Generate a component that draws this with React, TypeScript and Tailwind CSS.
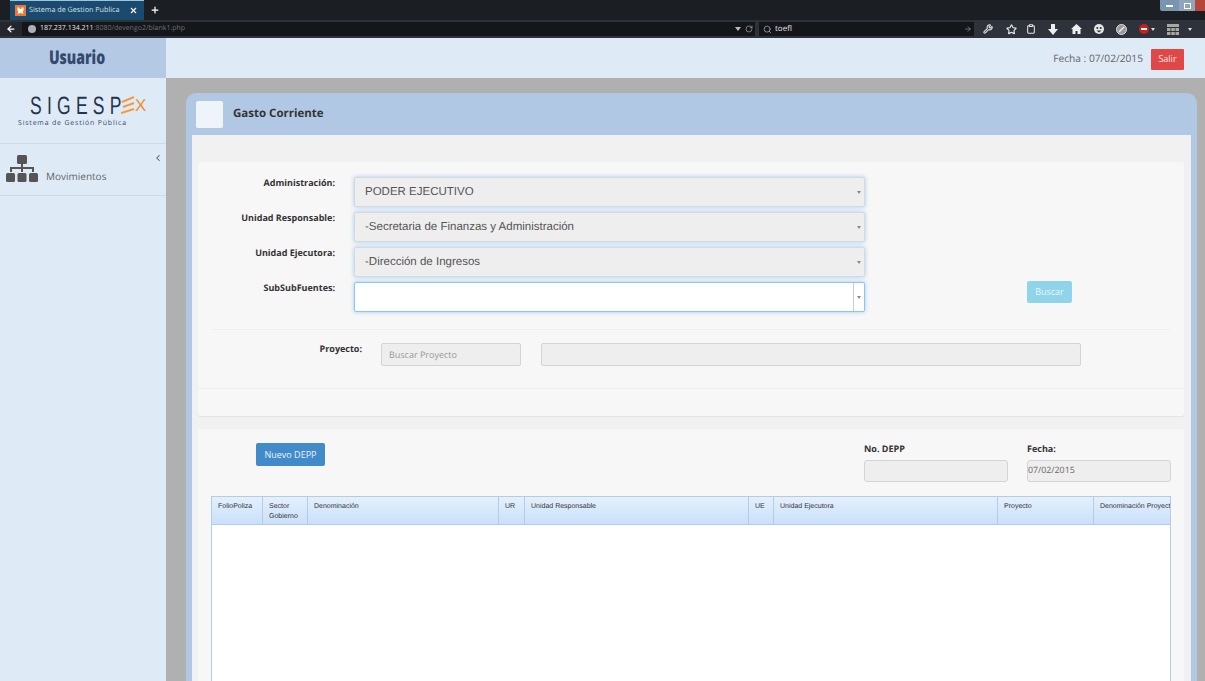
import React from "react";
import { ArrowLeft, ArrowRight, ChevronLeft, Clipboard, Plus, RotateCw, Search, Star, Wrench, X } from "lucide-react";

const os = "font-['Open_Sans',sans-serif]";
const lib = "font-['Liberation_Sans',sans-serif]";

function Caret() {
  return <span className="w-0 h-0 border-l-[2.5px] border-r-[2.5px] border-t-[3px] border-l-transparent border-r-transparent border-t-[#888]" />;
}

function SelectRow({ label, value, white }: { label: string; value?: string; white?: boolean }) {
  return (
    <div className="flex h-[30px] items-start">
      <label className={`w-[123px] -mt-[1px] text-right text-[9px] leading-[13px] font-bold text-[#333] ${os}`}>{label}</label>
      <div
        className={`ml-[19px] w-[511px] h-[30px] flex items-center rounded-[2px] border ${
          white ? "bg-white border-[#8cc4f2]" : "bg-[#eeeeee] border-[#d3dbe0]"
        } shadow-[0_0_4px_rgba(102,175,233,0.6)]`}
      >
        <span className={`flex-1 pl-[10px] pt-[2px] text-[11.5px] text-[#555] ${lib}`}>{value}</span>
        <span className={`w-[11px] h-full flex items-center justify-center ${white ? "border-l border-[#ccc]" : ""}`}>
          <Caret />
        </span>
      </div>
    </div>
  );
}

function Th({ w, children, last }: { w: string; children: React.ReactNode; last?: boolean }) {
  return (
    <div className={`${w} shrink-0 h-full pl-[6px] pt-[5px] text-[7px] leading-[10px] text-[#333] whitespace-nowrap overflow-hidden ${last ? "" : "border-r border-[#b5cde4]"} ${lib}`}>
      {children}
    </div>
  );
}

function TopBar() {
  const ic = "text-[#e6e6e6]";
  return (
    <div className="h-[38px] shrink-0 flex flex-col">
      <div className="h-[20px] bg-[#1b1e22] flex items-end relative">
        <div className="ml-[10px] w-[134px] h-[20px] bg-[#1a4a6e] border-t border-[#9cc4dc] flex items-center pl-[5px]">
          <svg width="11" height="11" viewBox="0 0 11 11" className="shrink-0">
            <rect width="11" height="11" fill="#f0762f" />
            <path d="M2.5 2.5h2v1.5h2V2.5h2v3l-1 1 1 2h-2l-1-1-1 1h-2l1-2-1-1z" fill="#fff" />
          </svg>
          <span className={`ml-[3px] w-[100px] shrink-0 whitespace-nowrap text-[7.2px] text-[#d8e2ea] ${os}`}>Sistema de Gestion Publica</span>
          <X size={9} strokeWidth={3} className="shrink-0 text-white" />
        </div>
        <Plus size={10} strokeWidth={3} className="ml-[6px] mb-[5px] text-white" />
        <div className="absolute right-0 top-0 w-[45px] h-[11px] flex rounded-bl-[2px] overflow-hidden">
          <div className="w-[19px] bg-[#7a95b0] flex items-center justify-center"><span className="w-[7px] h-[2px] bg-white" /></div>
          <div className="w-[16px] bg-[#8fa5ba] flex items-center justify-center"><span className="w-[7px] h-[6px] border border-white" /></div>
          <div className="flex-1 bg-[#b5463a]" />
        </div>
      </div>
      <div className="h-[18px] bg-[#2e323b] flex items-center">
        <div className="w-[22px] h-[14px] flex items-center justify-center bg-[#23262c]">
          <ArrowLeft size={10} strokeWidth={3} className="text-white" />
        </div>
        <div className="w-[733px] h-[14px] bg-[#14161a] flex items-center pl-[6px]">
          <span className="w-[8px] h-[8px] rounded-full bg-[#aab0b5]" />
          <span className={`ml-[4px] text-[7px] text-[#e2e2e2] ${os}`}>187.237.134.211<span className="text-[#6d7278]">:8080/devengo2/blank1.php</span></span>
          <span className="flex-1" />
          <span className="w-0 h-0 border-l-[3px] border-r-[3px] border-t-[4px] border-l-transparent border-r-transparent border-t-[#bbb]" />
          <RotateCw size={8} className="ml-[4px] mr-[2px] text-[#aaa]" />
        </div>
        <div className="ml-[4px] w-[215px] h-[14px] bg-[#14161a] flex items-center pl-[4px]">
          <Search size={9} className="text-[#aaa]" />
          <span className={`ml-[3px] text-[8px] text-[#e2e2e2] ${os}`}>toefl</span>
          <span className="flex-1" />
          <ArrowRight size={8} className="mr-[2px] text-[#999]" />
        </div>
        <div className="flex items-center pl-[9px] h-full">
          <Wrench size={10} strokeWidth={2.5} className={ic} />
          <Star size={11} strokeWidth={2.5} className={`${ic} ml-[13px]`} />
          <Clipboard size={10} strokeWidth={2.5} className={`${ic} ml-[9px]`} />
          <svg width="10" height="11" viewBox="0 0 10 11" fill="#eee" className="ml-[12px]"><path d="M3 0h4v5h3l-5 6-5-6h3z" /></svg>
          <svg width="11" height="10" viewBox="0 0 11 10" fill="#eee" className="ml-[13px]"><path d="M5.500 0L11 5H9.500v5H6.500V7h-2v3H1.500V5H0z" /></svg>
          <svg width="10" height="10" viewBox="0 0 10 10" className="ml-[12px]"><circle cx="5" cy="5" r="5" fill="#e6e6e6" /><circle cx="3.300" cy="4" r="1" fill="#333" /><circle cx="6.700" cy="4" r="1" fill="#333" /><path d="M2.500 6.500h5L5 8.500z" fill="#333" /></svg>
          <svg width="11" height="11" viewBox="0 0 11 11" className="ml-[12px]"><circle cx="5.500" cy="5.500" r="5" fill="#999" stroke="#ddd" /><path d="M3 8L8 3" stroke="#eee" strokeWidth="1.500" /></svg>
          <span className="ml-[12px] w-[10px] h-[10px] rounded-full bg-[#c81e1e] flex items-center justify-center">
            <span className="w-[6px] h-[2px] bg-white" />
          </span>
          <span className="ml-[2px] w-0 h-0 border-l-[2px] border-r-[2px] border-t-[3px] border-l-transparent border-r-transparent border-t-[#ddd]" />
          <svg width="12" height="11" viewBox="0 0 12 11" fill="#a8a8a0" className="ml-[12px]"><rect width="12" height="3" /><rect y="4" width="3.500" height="3" /><rect x="4.300" y="4" width="3.500" height="3" /><rect x="8.500" y="4" width="3.500" height="3" /><rect y="8" width="3.500" height="3" /><rect x="4.300" y="8" width="3.500" height="3" /><rect x="8.500" y="8" width="3.500" height="3" /></svg>
          <span className="ml-[9px] w-0 h-0 border-l-[2px] border-r-[2px] border-t-[3px] border-l-transparent border-r-transparent border-t-[#ddd]" />
        </div>
      </div>
    </div>
  );
}

function Sitemap() {
  return (
    <svg width="32" height="28" viewBox="0 0 32 28" fill="#555">
      <rect x="11" y="0" width="10" height="9" rx="1.5" />
      <rect x="15" y="9" width="2" height="4" />
      <rect x="4" y="12" width="24" height="2" />
      <rect x="4" y="12" width="2" height="5" />
      <rect x="15" y="12" width="2" height="5" />
      <rect x="26" y="12" width="2" height="5" />
      <rect x="0" y="18" width="9" height="9" rx="1.5" />
      <rect x="11.5" y="18" width="9" height="9" rx="1.5" />
      <rect x="23" y="18" width="9" height="9" rx="1.5" />
    </svg>
  );
}

function Sidebar() {
  return (
    <aside className="w-[166px] shrink-0 bg-[#deebf7] flex flex-col">
      <div className="h-[40px] bg-[#b4c9e3] flex items-center justify-center pr-[13px] pb-[2px]">
        <span className={`inline-block scale-x-[0.74] text-[19px] font-extrabold text-[#34496f] ${os}`}>Usuario</span>
      </div>
      <div className="h-[66px] border-b border-[#cfdbe6] pt-[16px] pl-[18px] overflow-hidden">
        <div className="flex items-center pl-[12px] h-[24px]">
          <span className={`inline-block w-[91px] origin-left scale-x-[0.7] text-[25px] leading-[24px] tracking-[7.5px] text-[#24344f] whitespace-nowrap ${lib}`}>SIGESP</span>
          <svg width="14" height="20" viewBox="0 0 14 20" stroke="#f59a3c" strokeWidth="2" fill="none" className="shrink-0">
            <path d="M1 6 L13 1 M2 11 L13 7 M0 17 L13 13" />
          </svg>
          <span className={`text-[17px] leading-[24px] text-[#f28c2c] ${lib}`}>X</span>
        </div>
        <div className={`mt-[1px] text-[7px] leading-[10px] tracking-[0.8px] text-[#3d4d66] whitespace-nowrap ${os}`}>Sistema de Gestión Pública</div>
      </div>
      <div className="h-[52px] border-b border-[#cfdbe6] relative flex items-start pl-[6px] pt-[11px]">
        <Sitemap />
        <span className={`ml-[8px] mt-[14px] text-[10px] text-[#666] ${os}`}>Movimientos</span>
        <ChevronLeft size={10} strokeWidth={2.5} className="absolute right-[3px] top-[9px] text-[#555]" />
      </div>
    </aside>
  );
}

function FormCard() {
  return (
    <section className="h-[254px] shrink-0 bg-[#f7f7f7] rounded-[2px] shadow-[0_1px_1px_rgba(0,0,0,0.06)]">
      <div className="pt-[15px] px-[14px]">
        <div className="relative flex flex-col gap-[5px]">
          <SelectRow label="Administración:" value="PODER EJECUTIVO" />
          <SelectRow label="Unidad Responsable:" value="-Secretaria de Finanzas y Administración" />
          <SelectRow label="Unidad Ejecutora:" value="-Dirección de Ingresos" />
          <SelectRow label="SubSubFuentes:" white />
          <button className={`absolute left-[815px] top-[104px] w-[45px] h-[22px] rounded-[2px] bg-[#8fd4e8] text-[9px] text-[#e8f6fa] ${os}`}>Buscar</button>
        </div>
        <div className="mt-[17px] border-t border-[#efefef] w-[958px]" />
        <div className="mt-[13px] flex items-start">
          <label className={`w-[150px] -mt-[1px] text-right text-[9px] leading-[13px] font-bold text-[#333] ${os}`}>Proyecto:</label>
          <div className={`ml-[19px] w-[140px] h-[23px] bg-[#eeeeee] border border-[#d4d4d4] rounded-[2px] flex items-center pl-[7px] text-[9px] text-[#999] ${os}`}>Buscar Proyecto</div>
          <div className="ml-[20px] w-[540px] h-[23px] bg-[#eeeeee] border border-[#d4d4d4] rounded-[2px]" />
        </div>
      </div>
      <div className="mt-[22px] border-t border-[#efefef]" />
    </section>
  );
}

function GridCard() {
  return (
    <section className="mt-[13px] flex-1 bg-[#f7f7f7] rounded-[2px] pt-[14px] pl-[13px]">
      <div className="h-[53px] flex items-start">
        <button className={`ml-[45px] w-[69px] h-[23px] rounded-[2px] bg-[#428bca] text-[9px] text-[#eaf3fa] ${os}`}>Nuevo DEPP</button>
        <div className="ml-[539px] w-[144px] -mt-[1px]">
          <div className={`text-[9px] leading-[14px] font-bold text-[#333] ${os}`}>No. DEPP</div>
          <div className="mt-[4px] h-[22px] bg-[#eeeeee] border border-[#d4d4d4] rounded-[3px]" />
        </div>
        <div className="ml-[19px] w-[144px] -mt-[1px]">
          <div className={`text-[9px] leading-[14px] font-bold text-[#333] ${os}`}>Fecha:</div>
          <div className={`mt-[4px] h-[22px] bg-[#eeeeee] border border-[#d4d4d4] rounded-[3px] flex items-center text-[8.8px] text-[#666] ${os}`}>07/02/2015</div>
        </div>
      </div>
      <div className="w-[960px] h-[300px] bg-white border border-[#b5cde4] overflow-hidden">
        <div className="h-[28px] flex border-b border-[#b5cde4] bg-gradient-to-b from-[#e4f0fc] to-[#c9e0fb]">
          <Th w="w-[51px]">FolioPoliza</Th>
          <Th w="w-[45px]">Sector<br />Gobierno</Th>
          <Th w="w-[191px]">Denominación</Th>
          <Th w="w-[26px]">UR</Th>
          <Th w="w-[224px]">Unidad Responsable</Th>
          <Th w="w-[25px]">UE</Th>
          <Th w="w-[224px]">Unidad Ejecutora</Th>
          <Th w="w-[96px]">Proyecto</Th>
          <Th w="w-[76px]" last>Denominación Proyecto</Th>
        </div>
      </div>
    </section>
  );
}

export default function App() {
  return (
    <div className="w-[1205px] h-[681px] overflow-hidden flex flex-col bg-[#b0b0b0] [text-rendering:geometricPrecision]">
      <TopBar />
      <div className="flex-1 min-h-0 flex">
        <Sidebar />
        <main className="flex-1 min-w-0 flex flex-col">
          <header className="h-[40px] shrink-0 bg-[#deebf7] flex items-center justify-end pr-[21px]">
            <span className={`mt-[1px] text-[10.2px] text-[#666] ${os}`}>Fecha : 07/02/2015</span>
            <button className={`ml-[8px] mt-[2px] w-[33px] h-[21px] bg-[#e04848] text-[9px] text-[#fbe6e6] rounded-[1px] ${os}`}>Salir</button>
          </header>
          <div className="flex-1 min-h-0 pt-[15px] pl-[20px] pr-[8px]">
            <div className="h-full bg-[#b0c8e3] rounded-t-[10px] px-[6px] flex flex-col">
              <div className="h-[42px] shrink-0 flex items-center pl-[4px]">
                <div className="w-[27px] h-[27px] bg-[#eff4fa] rounded-[2px]" />
                <h1 className={`ml-[10px] -mt-[1px] text-[11.5px] font-bold text-[#333] ${os}`}>Gasto Corriente</h1>
              </div>
              <div className="flex-1 min-h-0 bg-[#f1f1f1] pt-[27px] pl-[6px] pr-[7px] flex flex-col">
                <FormCard />
                <GridCard />
              </div>
            </div>
          </div>
        </main>
      </div>
    </div>
  );
}
